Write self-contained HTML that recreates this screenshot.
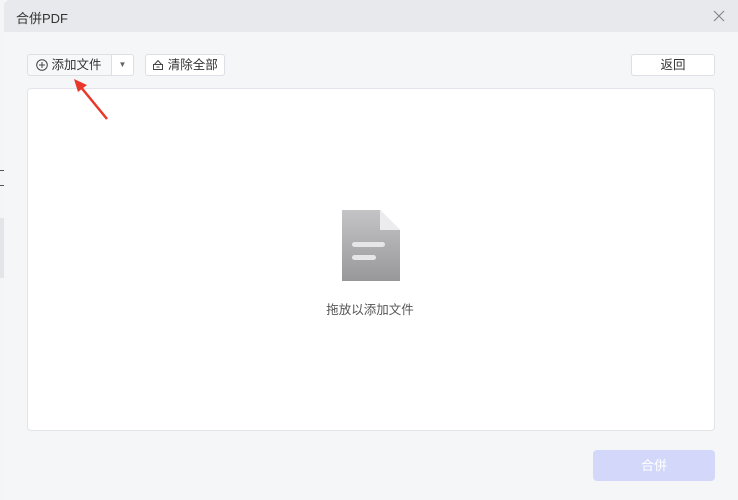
<!DOCTYPE html>
<html><head><meta charset="utf-8"><style>
*{margin:0;padding:0;box-sizing:border-box}
body{width:738px;height:500px;overflow:hidden;background:#f4f5f7;font-family:"Liberation Sans","Noto Sans CJK SC",sans-serif;font-size:13px;color:#333;position:relative}
.dlg{position:absolute;left:4px;top:0;width:734px;height:500px;background:#f5f6f8}
.title{position:absolute;left:4px;top:0;width:734px;height:32px;background:#e8e9ed;border-top-left-radius:6px}
.title span{position:absolute;left:12px;top:8px;font-size:13px;color:#333}
.btn{position:absolute;height:22px;background:#fff;border:1px solid #dcdfe4;border-radius:3px;font-size:12.5px;line-height:20px;color:#333;text-align:center}
.box{position:absolute;left:27px;top:88px;width:688px;height:343px;background:#fff;border:1px solid #e2e4e9;border-radius:4px}
</style></head><body>
<div style="position:absolute;left:0;top:170px;width:4px;height:16px;border-top:1px solid #555;border-bottom:1px solid #555"></div>
<div style="position:absolute;left:0;top:218px;width:4px;height:60px;background:#e4e5e8"></div>
<div class="dlg"></div>
<div class="title"><span>合併PDF</span>
<svg style="position:absolute;right:13px;top:10px" width="12" height="12" viewBox="0 0 12 12"><path d="M1 1L11 11M11 1L1 11" stroke="#888" stroke-width="1.2"/></svg></div>
<div class="btn" style="left:27px;top:54px;width:85px;border-radius:3px 0 0 3px;background:#f7f8fa;text-align:left;padding-left:8px">
<svg style="vertical-align:-2px" width="12" height="12" viewBox="0 0 12 12"><circle cx="6" cy="6" r="5.3" fill="none" stroke="#444" stroke-width="1"/><path d="M6 3v6M3 6h6" stroke="#444" stroke-width="1"/></svg> 添加文件</div>
<div class="btn" style="left:111px;top:54px;width:23px;border-radius:0 3px 3px 0;font-size:8px;color:#666">▼</div>
<div class="btn" style="left:145px;top:54px;width:80px">
<svg style="vertical-align:-2px" width="12" height="12" viewBox="0 0 12 12"><path d="M1.5 5.5h9v5h-9zM2.5 5.5L6 1.5L9.5 5.5M4.5 8h3" fill="none" stroke="#444" stroke-width="1"/></svg> 清除全部</div>
<div class="btn" style="left:631px;top:54px;width:84px">返回</div>
<div class="box"></div>
<svg style="position:absolute;left:70px;top:76px" width="42" height="46"><path d="M37 43L10 10" stroke="#e8382b" stroke-width="2.5"/><path d="M4 3L17 9L8 16Z" fill="#e8382b"/></svg>
<svg style="position:absolute;left:342px;top:210px" width="58" height="71" viewBox="0 0 58 71"><defs><linearGradient id="g" x1="0" y1="0" x2="0" y2="1"><stop offset="0" stop-color="#c4c4c6"/><stop offset="1" stop-color="#98989b"/></linearGradient></defs><path d="M0 0H38L58 20V71H0Z" fill="url(#g)"/><path d="M38 0V20H58Z" fill="#ececee"/><rect x="10" y="32" width="33" height="5" rx="2.5" fill="#e6e6e8"/><rect x="10" y="45" width="24" height="5" rx="2.5" fill="#e6e6e8"/></svg>
<div style="position:absolute;left:300px;top:299px;width:140px;text-align:center;font-size:12.5px;color:#555">拖放以添加文件</div>
<div style="position:absolute;left:593px;top:450px;width:122px;height:31px;background:#d3d8fb;border-radius:4px;color:#fff;text-align:center;line-height:31px;font-size:13px">合併</div>
</body></html>
